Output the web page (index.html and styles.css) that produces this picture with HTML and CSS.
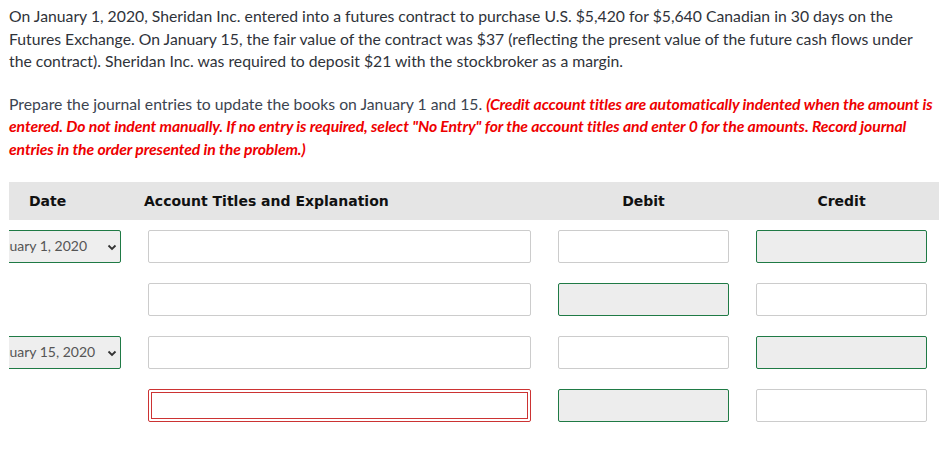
FILE: index.html
```html
<!DOCTYPE html>
<html>
<head>
<meta charset="utf-8">
<link rel="stylesheet" href="styles.css">
</head>
<body>
<div class="page">
  <p class="intro">On January 1, 2020, Sheridan Inc. entered into a futures contract to purchase U.S. $5,420 for $5,640 Canadian in 30 days on the Futures Exchange. On January 15, the fair value of the contract was $37 (reflecting the present value of the future cash flows under the contract). Sheridan Inc. was required to deposit $21 with the stockbroker as a margin.</p>
  <p class="task">Prepare the journal entries to update the books on January 1 and 15. <em class="note">(Credit account titles are automatically indented when the amount is entered. Do not indent manually. If no entry is required, select "No Entry" for the account titles and enter 0 for the amounts. Record journal entries in the order presented in the problem.)</em></p>

  <div class="journal">
    <div class="head">
      <div class="h-date">Date</div>
      <div class="h-title">Account Titles and Explanation</div>
      <div class="h-num">Debit</div>
      <div class="h-num">Credit</div>
    </div>

    <div class="row">
      <div class="date-cell"><div class="select">January 1, 2020<span class="chev"><svg width="10" height="7" viewBox="0 0 10 7"><path d="M1.5 1.5 L5 5 L8.5 1.5" fill="none" stroke="#333" stroke-width="1.8"/></svg></span></div></div>
      <div class="field"></div>
      <div class="field"></div>
      <div class="field filled"></div>
    </div>

    <div class="row">
      <div class="date-cell"></div>
      <div class="field"></div>
      <div class="field filled"></div>
      <div class="field"></div>
    </div>

    <div class="row">
      <div class="date-cell"><div class="select">January 15, 2020<span class="chev"><svg width="10" height="7" viewBox="0 0 10 7"><path d="M1.5 1.5 L5 5 L8.5 1.5" fill="none" stroke="#333" stroke-width="1.8"/></svg></span></div></div>
      <div class="field"></div>
      <div class="field"></div>
      <div class="field filled"></div>
    </div>

    <div class="row">
      <div class="date-cell"></div>
      <div class="field error"><div class="error-inner"></div></div>
      <div class="field filled"></div>
      <div class="field"></div>
    </div>
  </div>
</div>
</body>
</html>
```

FILE: styles.css
```css
html, body {
  margin: 0;
  padding: 0;
  background: #fff;
}

.page {
  width: 930px;
  padding: 5px 0 0 9px;
  font-family: Lato, "Open Sans", sans-serif;
  font-size: 15.75px;
  line-height: 22.5px;
}

.intro {
  margin: 0;
  color: #2f333a;
}

.task {
  margin: 20px 0 0;
  color: #3c4450;
}

.note {
  color: #ee0000;
  font-weight: bold;
  font-style: italic;
  letter-spacing: -0.1px;
}

.journal {
  margin-top: 22px;
}

.head {
  display: grid;
  grid-template-columns: 112px 383px 171px 171px;
  column-gap: 27px;
  height: 38px;
  align-items: center;
  background: #e5e5e5;
  font-family: "DejaVu Sans", Verdana, sans-serif;
  font-weight: bold;
  font-size: 14px;
  color: #111;
}

.h-date {
  padding-left: 20px;
}

.h-title {
  margin-left: -4px;
}

.h-num {
  text-align: center;
}

.row {
  display: grid;
  grid-template-columns: 112px 383px 171px 171px;
  column-gap: 27px;
  height: 33px;
  margin-top: 20px;
}

.head + .row {
  margin-top: 10px;
}

.date-cell {
  overflow: hidden;
}

.select {
  box-sizing: border-box;
  height: 33px;
  margin-left: -30px;
  width: 142px;
  border: 1px solid #1f7a45;
  border-radius: 2px;
  background: #eeeeee;
  display: flex;
  align-items: center;
  padding-left: 9px;
  font-size: 14px;
  color: #555;
  position: relative;
  white-space: nowrap;
}

.chev {
  position: absolute;
  right: 3px;
  top: 13px;
  display: flex;
}

.field {
  box-sizing: border-box;
  height: 33px;
  border: 1px solid #cccccc;
  border-radius: 2px;
  background: #fff;
}

.field.filled {
  border-color: #1f7a45;
  background: #ededed;
}

.field.error {
  border-color: #cc3333;
  padding: 2px;
}

.error-inner {
  box-sizing: border-box;
  height: 100%;
  border: 1px solid #cc3333;
}
```
